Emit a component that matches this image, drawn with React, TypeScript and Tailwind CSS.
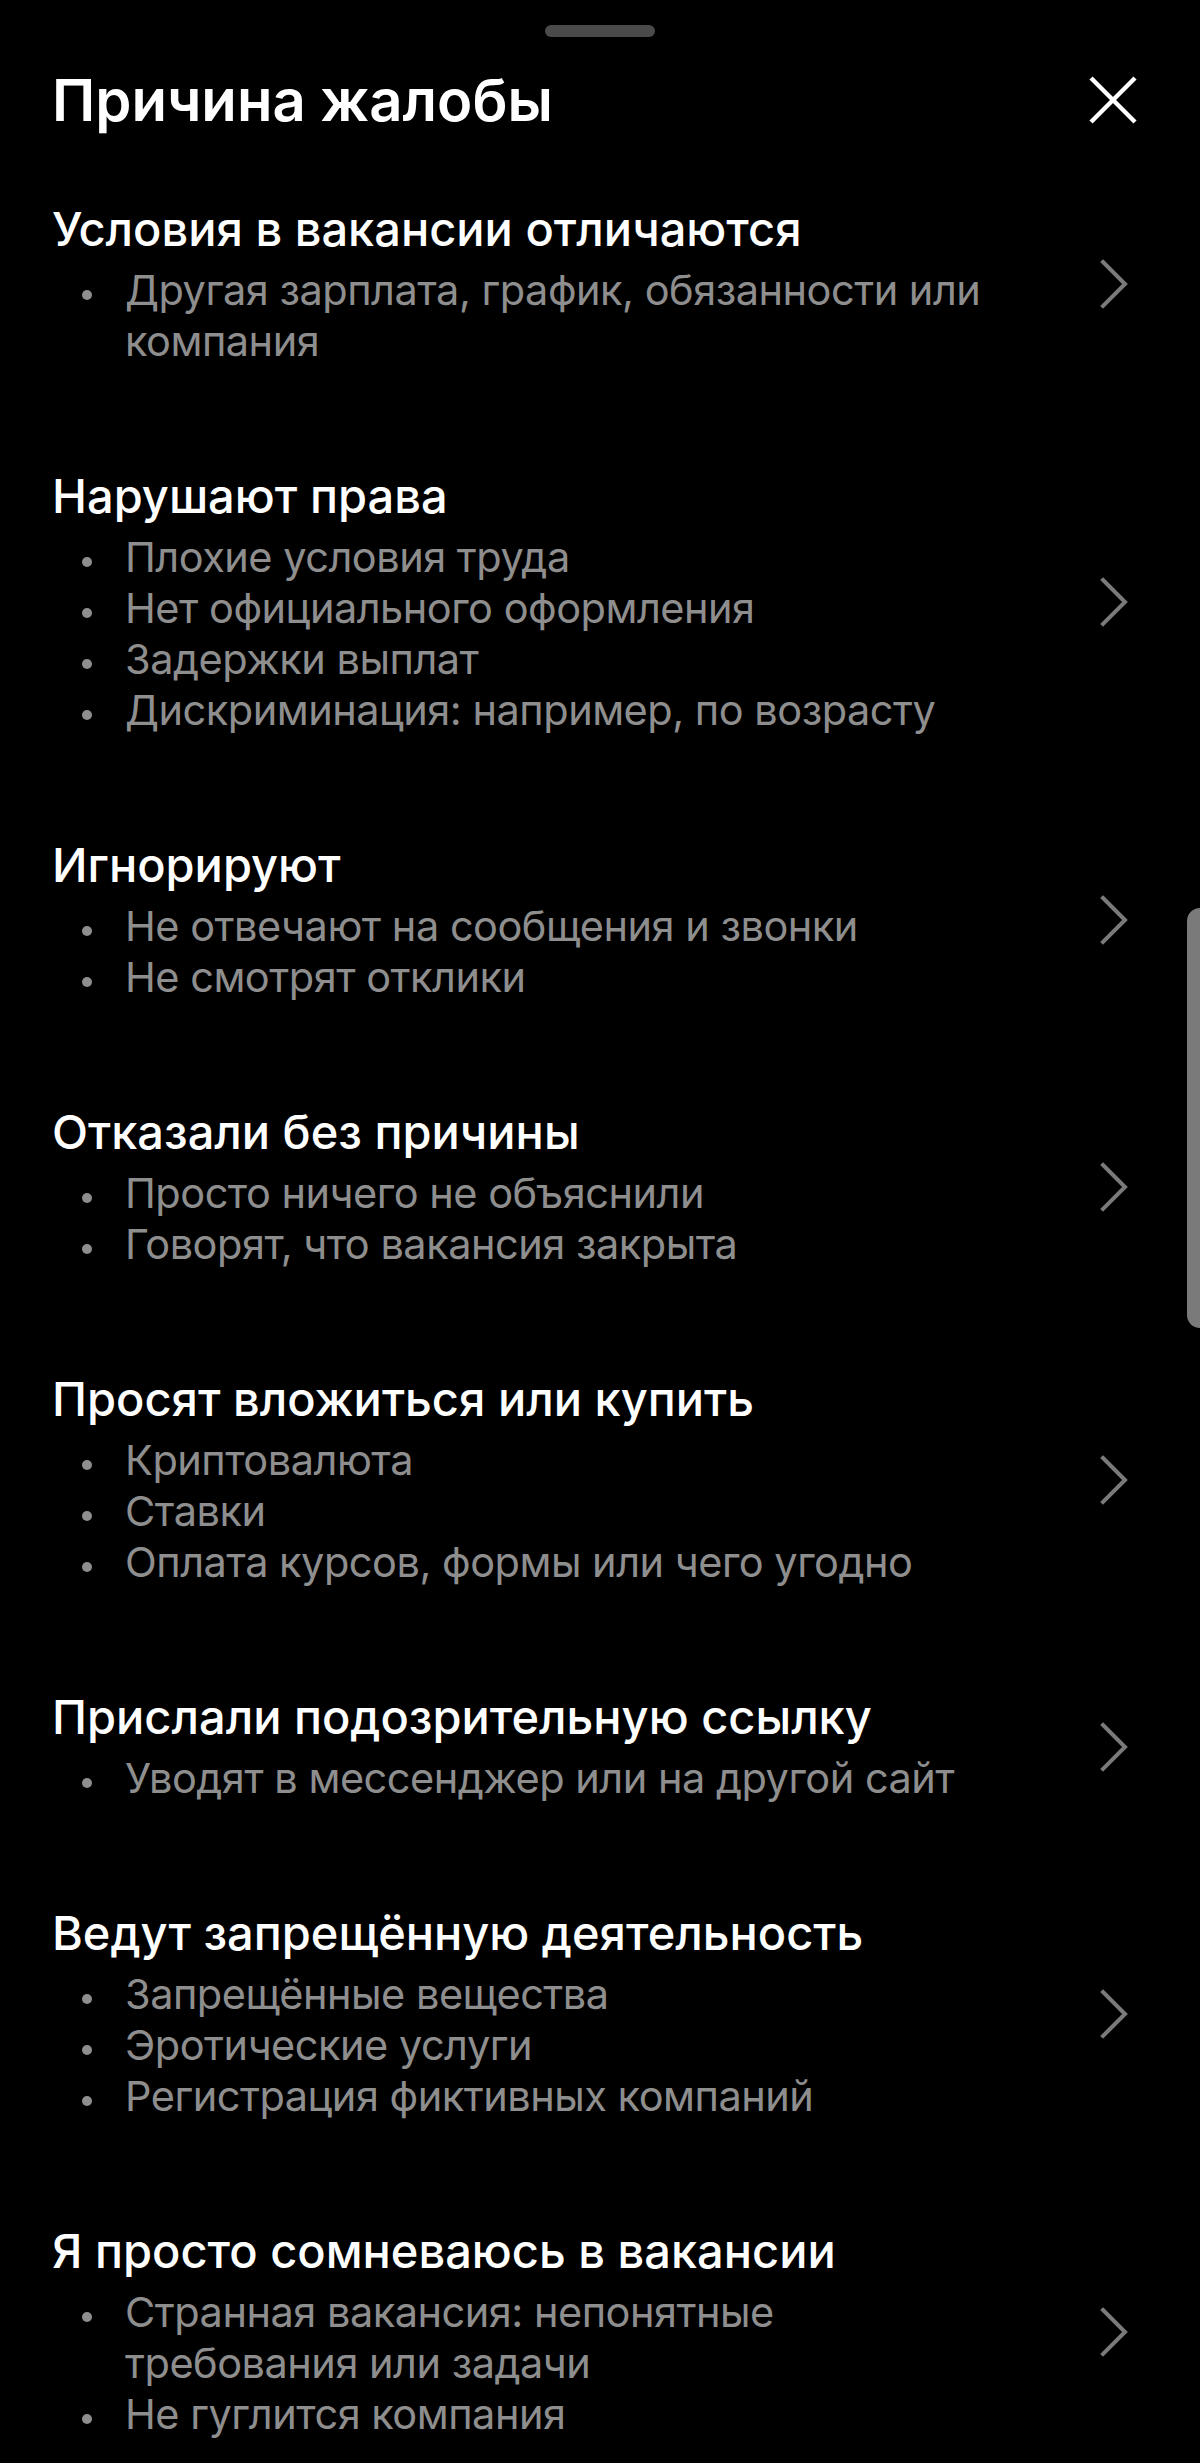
const reasons: { title: string; items: string[] }[] = [
  {
    title: 'Условия в вакансии отличаются',
    items: ['Другая зарплата, график, обязанности или компания'],
  },
  {
    title: 'Нарушают права',
    items: [
      'Плохие условия труда',
      'Нет официального оформления',
      'Задержки выплат',
      'Дискриминация: например, по возрасту',
    ],
  },
  {
    title: 'Игнорируют',
    items: ['Не отвечают на сообщения и звонки', 'Не смотрят отклики'],
  },
  {
    title: 'Отказали без причины',
    items: ['Просто ничего не объяснили', 'Говорят, что вакансия закрыта'],
  },
  {
    title: 'Просят вложиться или купить',
    items: ['Криптовалюта', 'Ставки', 'Оплата курсов, формы или чего угодно'],
  },
  {
    title: 'Прислали подозрительную ссылку',
    items: ['Уводят в мессенджер или на другой сайт'],
  },
  {
    title: 'Ведут запрещённую деятельность',
    items: ['Запрещённые вещества', 'Эротические услуги', 'Регистрация фиктивных компаний'],
  },
  {
    title: 'Я просто сомневаюсь в вакансии',
    items: ['Странная вакансия: непонятные требования или задачи', 'Не гуглится компания'],
  },
];

function Chevron() {
  return (
    <svg width="28" height="50" viewBox="0 0 28 50" fill="none">
      <polyline points="3,3 25,25 3,47" stroke="#7a7a7a" strokeWidth="4" strokeLinecap="square" />
    </svg>
  );
}

function ReasonRow({ title, items }: { title: string; items: string[] }) {
  return (
    <div className="flex items-center pl-[52px] pr-[72px]">
      <div className="flex-1">
        <div className="text-[47px] leading-[56px] font-medium text-white">{title}</div>
        <ul className="mt-[8px]">
          {items.map((item) => (
            <li key={item} className="flex items-start text-[41.5px] leading-[51px] text-[#8e8e8e] tracking-[-0.5px]">
              <span className="w-[73px] h-[51px] shrink-0 flex items-center pl-[30px] pt-[8px]">
                <span className="w-[10px] h-[10px] rounded-full bg-[#8e8e8e]" />
              </span>
              <span>{item}</span>
            </li>
          ))}
        </ul>
      </div>
      <div className="ml-[100px] w-[28px] shrink-0">
        <Chevron />
      </div>
    </div>
  );
}

export default function App() {
  return (
    <div
      className="w-[1200px] h-[2463px] bg-black relative overflow-hidden"
      style={{ fontFamily: 'Inter, "Noto Sans", sans-serif' }}
    >
      <div className="flex justify-center pt-[25px]">
        <div className="w-[110px] h-[12px] rounded-full bg-[#4a4a4a]" />
      </div>
      <div className="flex items-center justify-between h-[80px] mt-[23px] pl-[52px] pr-[62px]">
        <h1 className="text-[58px] leading-none font-semibold text-white">Причина жалобы</h1>
        <button className="w-[50px] h-[50px]">
          <svg width="50" height="50" viewBox="0 0 50 50" fill="none">
            <line x1="3" y1="3" x2="47" y2="47" stroke="white" strokeWidth="4.5" />
            <line x1="47" y1="3" x2="3" y2="47" stroke="white" strokeWidth="4.5" />
          </svg>
        </button>
      </div>
      <div className="flex flex-col gap-[101px] mt-[61px]">
        {reasons.map((r) => (
          <ReasonRow key={r.title} title={r.title} items={r.items} />
        ))}
      </div>
      <div className="absolute right-0 top-[908px] w-[13px] h-[420px] rounded-l-full bg-[#7a7a7a]" />
    </div>
  );
}
